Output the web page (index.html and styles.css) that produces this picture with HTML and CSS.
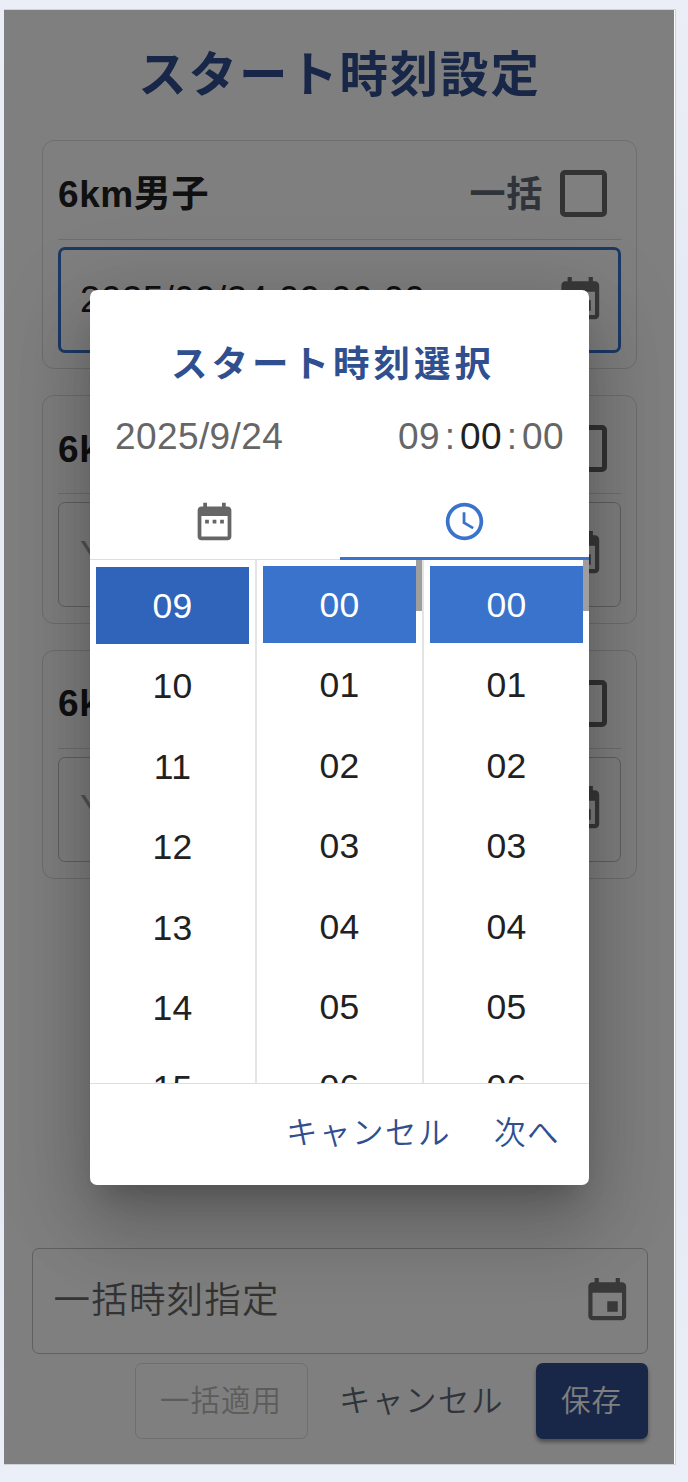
FILE: index.html
```html
<!DOCTYPE html>
<html lang="ja">
<head>
<meta charset="utf-8">
<title>スタート時刻設定</title>
<link rel="stylesheet" href="styles.css">
</head>
<body>
<svg class="defs" width="0" height="0" aria-hidden="true">
  <symbol id="event" viewBox="0 0 24 24"><path d="M17 12h-5v5h5v-5zM16 1v2H8V1H6v2H5c-1.11 0-1.99.9-1.99 2L3 19c0 1.1.89 2 2 2h14c1.1 0 2-.9 2-2V5c0-1.1-.9-2-2-2h-1V1h-2zm3 18H5V8h14v11z"/></symbol>
  <symbol id="range" viewBox="0 0 24 24"><path d="M9 11H7v2h2v-2zm4 0h-2v2h2v-2zm4 0h-2v2h2v-2zm2-7h-1V2h-2v2H8V2H6v2H5c-1.11 0-1.99.9-1.99 2L3 20c0 1.1.89 2 2 2h14c1.1 0 2-.9 2-2V6c0-1.1-.9-2-2-2zm0 16H5V9h14v11z"/></symbol>
  <symbol id="clock" viewBox="0 0 24 24"><path d="M11.99 2C6.47 2 2 6.48 2 12s4.47 10 9.99 10C17.52 22 22 17.52 22 12S17.52 2 11.99 2zM12 20c-4.42 0-8-3.58-8-8s3.58-8 8-8 8 3.58 8 8-3.58 8-8 8z"/><path d="M12.5 7H11v6l5.25 3.15.75-1.23-4.5-2.67z"/></symbol>
</svg>
<main class="panel">
  <h1 class="heading">スタート時刻設定</h1>
  <div class="cards">
    <section class="card">
      <div class="card-head"><span class="name">6km男子</span><label class="bulk"><span class="bulk-text">一括</span><span class="check"></span></label></div>
      <div class="field active"><span>2025/09/24 09:00:00</span><svg class="event"><use href="#event"/></svg></div>
    </section>
    <section class="card">
      <div class="card-head"><span class="name">6k</span><label class="bulk"><span class="check"></span></label></div>
      <div class="field"><span class="hint">Y</span><svg class="event"><use href="#event"/></svg></div>
    </section>
    <section class="card">
      <div class="card-head"><span class="name">6k</span><label class="bulk"><span class="check"></span></label></div>
      <div class="field"><span class="hint">Y</span><svg class="event"><use href="#event"/></svg></div>
    </section>
  </div>
  <footer class="footer">
    <div class="field bulk-field"><span class="label">一括時刻指定</span><svg class="event"><use href="#event"/></svg></div>
    <div class="actions">
      <button class="btn apply">一括適用</button>
      <button class="btn cancel">キャンセル</button>
      <button class="btn save">保存</button>
    </div>
  </footer>
  <div class="backdrop">
    <div class="dialog">
      <h2 class="dialog-title">スタート時刻選択</h2>
      <div class="value"><span>2025/9/24</span><span class="time">09<i>:</i><b>00</b><i>:</i>00</span></div>
      <div class="tabs">
        <div class="tab"><svg><use href="#range"/></svg></div>
        <div class="tab selected"><svg><use href="#clock"/></svg></div>
      </div>
      <div class="columns">
        <ul class="column hours"><li class="on focus">09</li><li>10</li><li>11</li><li>12</li><li>13</li><li>14</li><li>15</li></ul>
        <ul class="column scroll"><li class="on">00</li><li>01</li><li>02</li><li>03</li><li>04</li><li>05</li><li>06</li></ul>
        <ul class="column scroll"><li class="on">00</li><li>01</li><li>02</li><li>03</li><li>04</li><li>05</li><li>06</li></ul>
      </div>
      <div class="dialog-actions"><button class="btn">キャンセル</button><button class="btn">次へ</button></div>
    </div>
  </div>
</main>
</body>
</html>
```
FILE: styles.css
```css
* { box-sizing: border-box; }
body {
  margin: 0;
  height: 1482px;
  padding: 9px 0 0 4px;
  overflow: hidden;
  background: linear-gradient(#ebeef6, #e6eaf4 20%, #e6eaf4 80%, #ebeff7);
  font-family: "Liberation Sans", "Noto Sans CJK JP", sans-serif;
  color: #212121;
}
.defs { position: absolute; }
svg { display: block; fill: currentColor; }
.panel {
  position: relative;
  display: flex;
  flex-direction: column;
  width: 672px;
  height: 1456px;
  border: 1px solid #d0d2d8;
  border-left: 0;
  background: #fff;
}
.heading {
  margin: 0;
  height: 130px;
  line-height: 130px;
  text-align: center;
  font-size: 48.5px;
  letter-spacing: 1.8px;
  color: #304f8f;
}
.cards { display: flex; flex-direction: column; gap: 25.5px; padding: 0 37px 0 38px; }
.card {
  width: 595px;
  height: 229.3px;
  padding: 0 15px;
  border: 1px solid #dcdcdc;
  border-radius: 12px;
}
.card-head {
  display: flex;
  justify-content: space-between;
  align-items: center;
  height: 98.5px;
  padding: 8px 14px 0 0;
  border-bottom: 1px solid #dcdcdc;
  margin-bottom: 7.5px;
}
.name { padding-top: 2px; line-height: 40px; font-size: 37px; font-weight: 700; letter-spacing: .6px; }
.bulk { display: flex; align-items: center; gap: 17px; font-size: 36px; font-weight: 700; letter-spacing: .7px; color: #5e6874; }
.bulk-text { padding-top: 2px; line-height: 40px; }
.check { width: 47px; height: 47px; border: 5px solid #666; border-radius: 5px; }
.field {
  display: flex;
  justify-content: space-between;
  align-items: center;
  height: 105.5px;
  padding: 0 15px 0 21px;
  border: 1px solid #c0c0c0;
  border-radius: 7px;
  line-height: 40px;
  font-size: 37px;
  letter-spacing: .3px;
}
.field.active { border: 3px solid #3973cc; padding: 0 13px 0 19px; }
.field .hint { color: #a6a6a6; }
.event { width: 50.5px; height: 50.5px; color: #737373; }
.footer { margin-top: auto; padding: 0 27px 25px 27.5px; }
.bulk-field { width: 616px; padding: 0 14px 0 21px; }
.label { color: #666; font-weight: 350; font-size: 36.5px; letter-spacing: 1.2px; }
.actions { display: flex; justify-content: flex-end; margin-top: 9.5px; width: 616px; }
.btn {
  padding: 0;
  border: 0;
  background: none;
  font-family: inherit;
  font-weight: 350;
  line-height: 34px;
  font-size: 31.5px;
  letter-spacing: 1.5px;
  color: #304f8f;
  text-align: center;
}
.apply { width: 173px; height: 76px; border: 1px solid #dcdcdc; border-radius: 7px; color: #b8b8b8; font-size: 29.5px; letter-spacing: 1px; }
.cancel { width: 228px; height: 76px; color: #5e6874; }
.save { width: 112px; height: 76px; border-radius: 7px; background: #304f8f; color: #fff; font-size: 29.5px; letter-spacing: 1px; box-shadow: 0 3px 4px rgba(0,0,0,.4); }
.backdrop {
  position: absolute;
  inset: 0 1px 0 0;
  overflow: hidden;
  padding: 279.5px 0 0 86px;
  background: rgba(0,0,0,.5);
}
.dialog {
  width: 499px;
  height: 895.5px;
  overflow: hidden;
  border-radius: 7px;
  background: #fff;
  box-shadow: 0 21px 28px -13px rgba(0,0,0,.2), 0 46px 72px 6px rgba(0,0,0,.14), 0 17px 87px 15px rgba(0,0,0,.12);
}
.dialog-title {
  margin: 0;
  height: 120px;
  padding-right: 13px;
  line-height: 150px;
  text-align: center;
  font-size: 36.5px;
  letter-spacing: 4px;
  color: #304f8f;
}
.value { display: flex; justify-content: space-between; height: 76px; padding: 6.5px 25px 0 25px; font-size: 37px; letter-spacing: .4px; color: #666; }
.value b { font-weight: 400; color: #212121; }
.value i { display: inline-block; width: 20px; text-align: center; font-style: normal; }
.tabs { display: flex; height: 74.5px; }
.tab { flex: 1; display: flex; justify-content: center; padding-top: 13.5px; border-bottom: 1px solid #dedede; color: #666; }
.tab svg { width: 45px; height: 45px; }
.tab.selected { border-bottom: 3px solid #3973cc; color: #3973cc; }
.columns { display: flex; height: 522.5px; overflow: hidden; }
.column { position: relative; flex: 1; margin: 0; padding: 6px 6px 0; list-style: none; border-left: 2px solid #e4e4e4; }
.column.hours { border-left: 0; padding: 7px 6px 0; }
.column.scroll::after { content: ""; position: absolute; top: 0; right: 0; width: 6px; height: 51px; background: #9e9e9e; }
.column li { width: 153px; height: 77px; margin-bottom: 3.4px; line-height: 78px; text-align: center; font-size: 35.5px; letter-spacing: .3px; }
.column .on { background: #3973cc; color: #fff; }
.column .focus { background: #3064ba; }
.dialog-actions { display: flex; justify-content: flex-end; gap: 43px; height: 102px; padding: 0 29px 2px; border-top: 1px solid #dedede; }
```
